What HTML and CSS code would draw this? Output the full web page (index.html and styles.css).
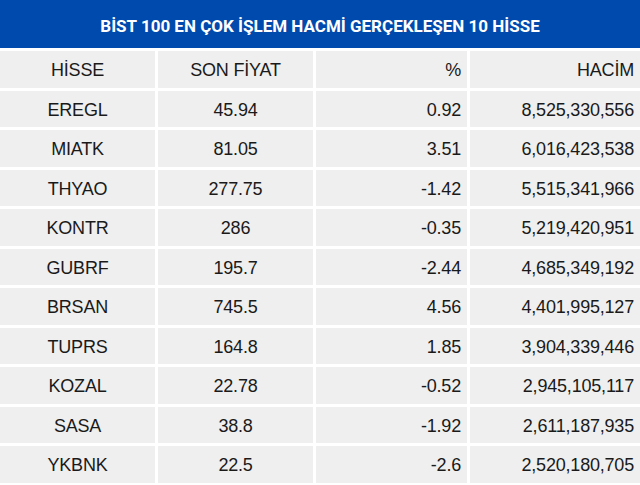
FILE: index.html
```html
<!DOCTYPE html>
<html lang="tr">
<head>
<meta charset="utf-8">
<link rel="stylesheet" href="styles.css">
</head>
<body>
<div class="title">BİST 100 EN ÇOK İŞLEM HACMİ GERÇEKLEŞEN 10 HİSSE</div>
<div class="table">
  <div class="cell c">HİSSE</div><div class="cell c">SON FİYAT</div><div class="cell r">%</div><div class="cell r">HACİM</div>
  <div class="cell c">EREGL</div><div class="cell c">45.94</div><div class="cell r">0.92</div><div class="cell r">8,525,330,556</div>
  <div class="cell c">MIATK</div><div class="cell c">81.05</div><div class="cell r">3.51</div><div class="cell r">6,016,423,538</div>
  <div class="cell c">THYAO</div><div class="cell c">277.75</div><div class="cell r">-1.42</div><div class="cell r">5,515,341,966</div>
  <div class="cell c">KONTR</div><div class="cell c">286</div><div class="cell r">-0.35</div><div class="cell r">5,219,420,951</div>
  <div class="cell c">GUBRF</div><div class="cell c">195.7</div><div class="cell r">-2.44</div><div class="cell r">4,685,349,192</div>
  <div class="cell c">BRSAN</div><div class="cell c">745.5</div><div class="cell r">4.56</div><div class="cell r">4,401,995,127</div>
  <div class="cell c">TUPRS</div><div class="cell c">164.8</div><div class="cell r">1.85</div><div class="cell r">3,904,339,446</div>
  <div class="cell c">KOZAL</div><div class="cell c">22.78</div><div class="cell r">-0.52</div><div class="cell r">2,945,105,117</div>
  <div class="cell c">SASA</div><div class="cell c">38.8</div><div class="cell r">-1.92</div><div class="cell r">2,611,187,935</div>
  <div class="cell c">YKBNK</div><div class="cell c">22.5</div><div class="cell r">-2.6</div><div class="cell r">2,520,180,705</div>
</div>
</body>
</html>
```
FILE: styles.css
```css
html, body {
  margin: 0;
  padding: 0;
  background: #ffffff;
  overflow: hidden;
}
body {
  font-family: "Liberation Sans", Arial, sans-serif;
  color: #1a1a1a;
  width: 640px;
  height: 485px;
}
.title {
  height: 48px;
  background: #004aad;
  color: #ffffff;
  font-family: Roboto, "Liberation Sans", sans-serif;
  font-weight: 700;
  font-size: 17px;
  display: flex;
  align-items: center;
  justify-content: center;
  padding-top: 4px;
  box-sizing: border-box;
}
.table {
  margin-top: 3px;
  display: grid;
  grid-template-columns: 155px 155px 151px 1fr;
  grid-auto-rows: 36.5px;
  column-gap: 3px;
  row-gap: 3px;
}
.cell {
  background: #efefef;
  font-size: 18px;
  display: flex;
  align-items: center;
  padding: 3px 6px 0;
  letter-spacing: -0.2px;
}
.c { justify-content: center; }
.r { justify-content: flex-end; }
```
